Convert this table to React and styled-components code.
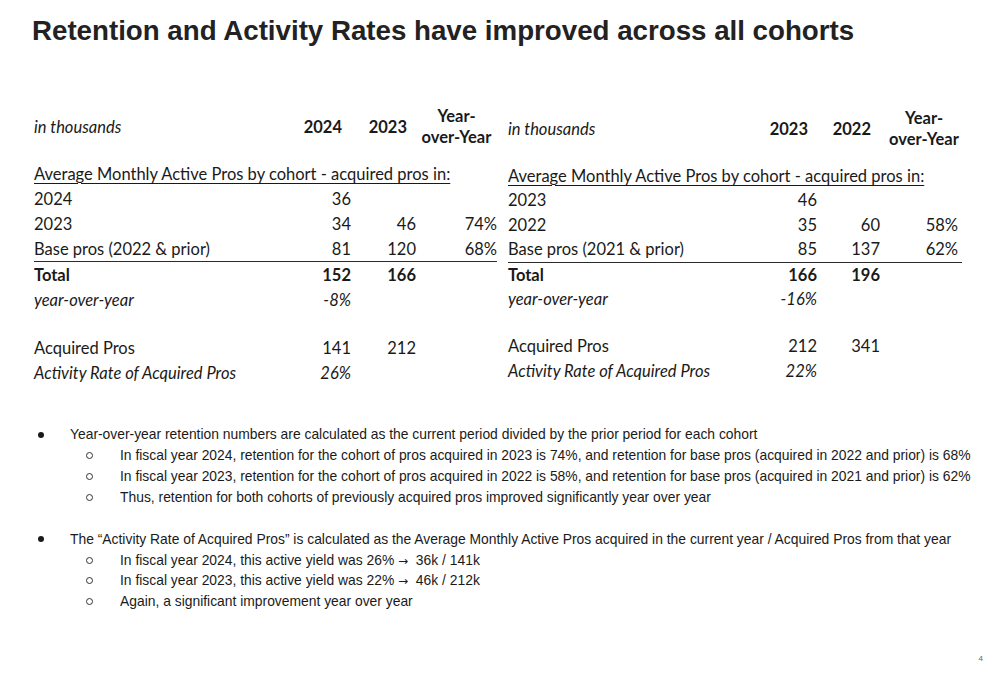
import React from "react";
import styled, { createGlobalStyle } from "styled-components";

const Global = createGlobalStyle`
  html, body { margin: 0; padding: 0; background: #ffffff; }
  #root { width: 1000px; height: 685px; }
`;

const Page = styled.div`
  width: 1000px;
  height: 685px;
  box-sizing: border-box;
  display: flex;
  flex-direction: column;
  background: #fff;
  overflow: hidden;
`;

const Title = styled.h1`
  margin: 14px 0 0 32px;
  font-family: "Liberation Sans", Arial, sans-serif;
  font-weight: 700;
  font-size: 27.7px;
  line-height: 34px;
  color: #222;
`;

const Tables = styled.div`
  display: flex;
  align-items: flex-start;
  gap: 11px;
  margin: 56px 0 0 34px;
`;

const Table = styled.div`
  display: flex;
  flex-direction: column;
  width: ${(p) => p.$width}px;
  margin-top: ${(p) => p.$offset || 0}px;
  font-family: Lato, "Open Sans", sans-serif;
  font-size: 16.5px;
  color: #1a1a1a;
`;

const Row = styled.div`
  display: grid;
  grid-template-columns: ${(p) => p.$cols};
  align-items: center;
  height: ${(p) => p.$h}px;
  ${(p) => (p.$ruled ? "border-bottom: 1.5px solid #2a2a2a;" : "")}
  ${(p) => (p.$bold ? "font-weight: 700;" : "")}
  ${(p) => (p.$italic ? "font-style: italic;" : "")}
`;

const HeadRow = styled.div`
  display: grid;
  grid-template-columns: ${(p) => p.$cols};
  align-items: center;
  height: 46px;
  margin-bottom: 11px;
`;

const Label = styled.div`
  white-space: nowrap;
`;

const HeadLabel = styled.div`
  font-style: italic;
  white-space: nowrap;
`;

const HeadYear = styled.div`
  text-align: right;
  font-weight: 700;
  padding-right: 9px;
`;

const HeadYoY = styled.div`
  text-align: center;
  font-weight: 700;
  line-height: 21px;
  padding-left: ${(p) => p.$pl || 0}px;
`;

const Num = styled.div`
  text-align: right;
  white-space: nowrap;
  padding-right: ${(p) => p.$pr || 0}px;
`;

const Section = styled.div`
  height: 25px;
  display: flex;
  align-items: center;
  text-decoration: underline;
  text-decoration-thickness: 1px;
  text-underline-offset: 3px;
  white-space: nowrap;
`;

const Spacer = styled.div`
  height: ${(p) => p.$h}px;
`;

const Bullets = styled.ul`
  list-style: none;
  margin: 38px 0 0 0;
  padding: 0;
  font-family: "Liberation Sans", Arial, sans-serif;
  font-size: 13.86px;
  line-height: 21px;
  color: #1a1a1a;
`;

const Item = styled.li`
  display: flex;
  align-items: center;
  height: ${(p) => (p.$tight ? 20.7 : 21)}px;
  padding-left: ${(p) => (p.$level === 2 ? 86 : 38)}px;
  margin-top: ${(p) => (p.$gap ? 21 : 0)}px;
  white-space: nowrap;
`;

const Dot = styled.span`
  flex: none;
  width: 6px;
  height: 6px;
  border-radius: 50%;
  margin-right: 26px;
  background: #1a1a1a;
`;

const Ring = styled.span`
  flex: none;
  width: 5px;
  height: 5px;
  border-radius: 50%;
  border: 1px solid #333;
  margin-right: 27px;
`;

const Text = styled.span`
  white-space: pre;
  line-height: 21px;
`;

const Arrow = styled.span`
  font-family: "DejaVu Sans", sans-serif;
  font-size: 12px;
  line-height: 0;
`;

const Footer = styled.div`
  margin-top: auto;
  margin-bottom: 22px;
  display: flex;
  justify-content: flex-end;
  padding-right: 17px;
  font-family: "Liberation Sans", Arial, sans-serif;
  font-size: 8px;
  color: #666;
`;

const tables = [
  {
    width: 463,
    offset: 0,
    cols: "257px 60px 65px 81px",
    rowH: 25,
    spacer: 23,
    years: ["2024", "2023"],
    yoyPad: 0,
    rows: [
      ["2024", "36", "", ""],
      ["2023", "34", "46", "74%"],
      ["Base pros (2022 & prior)", "81", "120", "68%"],
    ],
    total: ["152", "166"],
    yoy: "-8%",
    acquired: ["141", "212"],
    rate: "26%",
    pr: 0,
  },
  {
    width: 454,
    offset: 2,
    cols: "249px 60px 63px 82px",
    rowH: 24.5,
    spacer: 22,
    years: ["2023", "2022"],
    yoyPad: 6,
    rows: [
      ["2023", "46", "", ""],
      ["2022", "35", "60", "58%"],
      ["Base pros (2021 & prior)", "85", "137", "62%"],
    ],
    total: ["166", "196"],
    yoy: "-16%",
    acquired: ["212", "341"],
    rate: "22%",
    pr: 4,
  },
];

function DataTable({ t }) {
  return (
    <Table $width={t.width} $offset={t.offset}>
      <HeadRow $cols={t.cols}>
        <HeadLabel>in thousands</HeadLabel>
        <HeadYear>{t.years[0]}</HeadYear>
        <HeadYear>{t.years[1]}</HeadYear>
        <HeadYoY $pl={t.yoyPad}>
          Year-
          <br />
          over-Year
        </HeadYoY>
      </HeadRow>
      <Section>Average Monthly Active Pros by cohort - acquired pros in:</Section>
      {t.rows.map((r, i) => (
        <Row key={r[0]} $cols={t.cols} $h={t.rowH} $ruled={i === t.rows.length - 1}>
          <Label>{r[0]}</Label>
          <Num>{r[1]}</Num>
          <Num>{r[2]}</Num>
          <Num $pr={t.pr}>{r[3]}</Num>
        </Row>
      ))}
      <Row $cols={t.cols} $h={t.rowH} $bold>
        <Label>Total</Label>
        <Num>{t.total[0]}</Num>
        <Num>{t.total[1]}</Num>
        <Num />
      </Row>
      <Row $cols={t.cols} $h={t.rowH} $italic>
        <Label>year-over-year</Label>
        <Num>{t.yoy}</Num>
        <Num />
        <Num />
      </Row>
      <Spacer $h={t.spacer} />
      <Row $cols={t.cols} $h={t.rowH}>
        <Label>Acquired Pros</Label>
        <Num>{t.acquired[0]}</Num>
        <Num>{t.acquired[1]}</Num>
        <Num />
      </Row>
      <Row $cols={t.cols} $h={t.rowH + 1} $italic>
        <Label>Activity Rate of Acquired Pros</Label>
        <Num>{t.rate}</Num>
        <Num />
        <Num />
      </Row>
    </Table>
  );
}

const notes = [
  { level: 1, text: "Year-over-year retention numbers are calculated as the current period divided by the prior period for each cohort" },
  { level: 2, text: "In fiscal year 2024, retention for the cohort of pros acquired in 2023 is 74%, and retention for base pros (acquired in 2022 and prior) is 68%" },
  { level: 2, text: "In fiscal year 2023, retention for the cohort of pros acquired in 2022 is 58%, and retention for base pros (acquired in 2021 and prior) is 62%" },
  { level: 2, text: "Thus, retention for both cohorts of previously acquired pros improved significantly year over year" },
  { level: 1, gap: true, tight: true, text: "The \u201CActivity Rate of Acquired Pros\u201D is calculated as the Average Monthly Active Pros acquired in the current year / Acquired Pros from that year" },
  { level: 2, tight: true, text: "In fiscal year 2024, this active yield was 26% ", arrow: true, tail: "  36k / 141k" },
  { level: 2, tight: true, text: "In fiscal year 2023, this active yield was 22% ", arrow: true, tail: "  46k / 212k" },
  { level: 2, tight: true, text: "Again, a significant improvement year over year" },
];

export default function App() {
  return (
    <Page>
      <Global />
      <Title>Retention and Activity Rates have improved across all cohorts</Title>
      <Tables>
        {tables.map((t, i) => (
          <DataTable key={i} t={t} />
        ))}
      </Tables>
      <Bullets>
        {notes.map((n, i) => (
          <Item key={i} $level={n.level} $gap={n.gap} $tight={n.tight}>
            {n.level === 1 ? <Dot /> : <Ring />}
            <Text>
              {n.text}
              {n.arrow && <Arrow>{"\u2192"}</Arrow>}
              {n.tail}
            </Text>
          </Item>
        ))}
      </Bullets>
      <Footer>4</Footer>
    </Page>
  );
}
